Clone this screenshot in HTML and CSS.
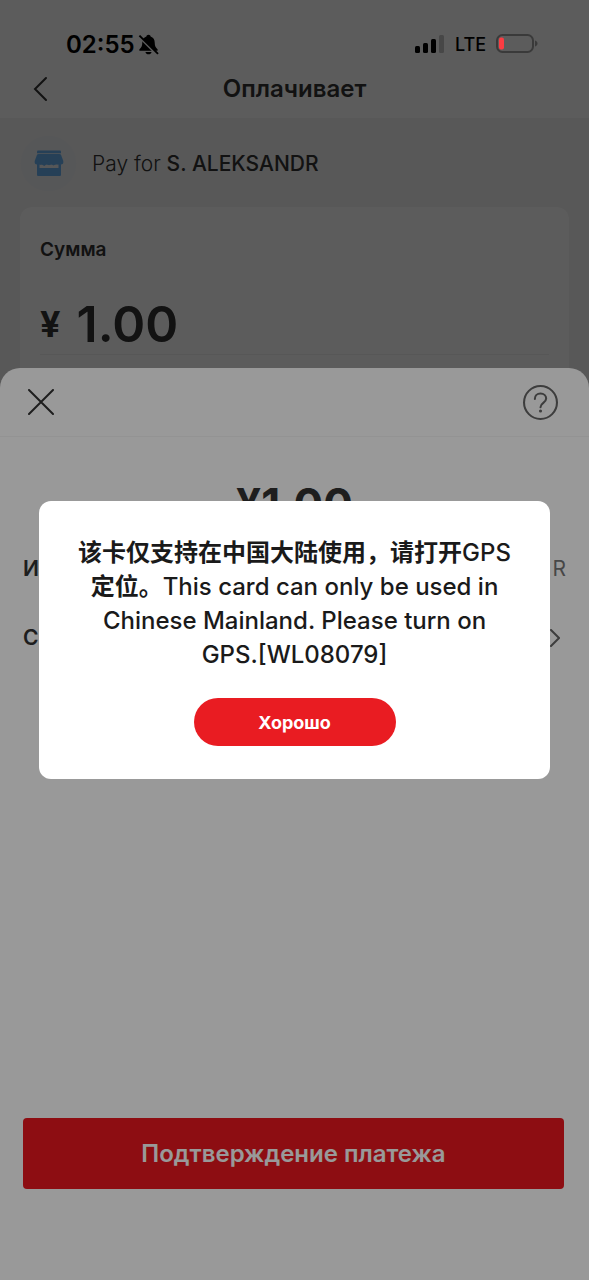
FILE: index.html
```html
<!DOCTYPE html>
<html lang="ru">
<head>
<meta charset="utf-8">
<meta name="viewport" content="width=device-width, initial-scale=1">
<title>Оплачивает</title>
<link rel="stylesheet" href="styles.css">
</head>
<body>
<div class="screen">
  <div class="status-bar">
    <div class="status-left">
      <span class="clock">02:55</span>
      <svg class="bell" viewBox="0 0 22 22" aria-hidden="true">
        <path d="M11 .8c-1.200 0-2.100.8-2.200 1.900C5.900 3.600 4.500 6 4.500 8.800c0 4-1.200 5.400-2.900 7.100-.5.6-.3 1.700.6 1.700h17.600c.9 0 1.100-1.100.6-1.700-1.700-1.700-2.900-3.100-2.900-7.100 0-2.800-1.400-5.200-4.300-6.100C13.100 1.600 12.200.8 11 .8zM7.800 18.800c.3 1.500 1.600 2.500 3.200 2.500s2.900-1 3.200-2.500z"/>
        <path class="bell-gap" d="M1 3 19.500 21.500"/>
        <path class="bell-slash" d="M1.500 1.700 21 20.800"/>
      </svg>
    </div>
    <div class="status-right">
      <svg class="signal" viewBox="0 0 30 20" aria-hidden="true">
        <rect x="0" y="12" width="5" height="7" rx="1.500"/>
        <rect x="8" y="9" width="5" height="10" rx="1.500"/>
        <rect x="16" y="5" width="5" height="14" rx="1.500"/>
        <rect class="signal-off" x="24" y="1" width="5" height="18" rx="1.500"/>
      </svg>
      <span class="network">LTE</span>
      <svg class="battery" viewBox="0 0 42 20" aria-hidden="true">
        <rect class="battery-case" x="1" y="1" width="36" height="17" rx="5.500"/>
        <rect class="battery-level" x="3" y="3.500" width="5" height="12" rx="2"/>
        <path class="battery-tip" d="M39 6.500c1.600.6 2.500 1.700 2.500 3s-.9 2.400-2.500 3z"/>
      </svg>
    </div>
  </div>

  <main class="page">
    <header class="nav">
      <button class="icon-button" type="button" aria-label="Назад">
        <svg class="back" viewBox="0 0 16 26"><path d="M13 2 2 13l11 11"/></svg>
      </button>
      <h1 class="nav-title">Оплачивает</h1>
    </header>
    <div class="payee">
      <span class="avatar">
        <svg class="shop" viewBox="0 0 30 28" aria-hidden="true">
          <path d="M4 .5h22a1 1 0 0 1 1 1v1.700H3V1.500a1 1 0 0 1 1-1z"/>
          <path d="M4.500 4h21c.8 0 1.300.3 1.600 1L29.300 11v1.500c0 1.200-.9 2-2.300 2H3c-1.400 0-2.300-.8-2.300-2V11L2.900 5c.3-.7.8-1 1.600-1z"/>
          <path d="M5.500 13h19v1.200l-2.300-.2-2.700 1.400-2-1.200-2.500 1-2.500-1-2.200 1.700-2.400-1.500-2.400.4z"/>
          <path d="M3 13.500h2.500v4.500h19v-4.500H27v11.500a1 1 0 0 1-1 1H4a1 1 0 0 1-1-1z"/>
        </svg>
      </span>
      <p class="payee-text">Pay for <strong>S. ALEKSANDR</strong></p>
    </div>
    <section class="amount-card">
      <h2 class="amount-label">Сумма</h2>
      <p class="amount"><span class="currency">¥</span> <span class="value">1.00</span></p>
    </section>
  </main>

  <div class="scrim"></div>

  <section class="sheet">
    <div class="sheet-head">
      <button class="icon-button" type="button" aria-label="Закрыть">
        <svg class="close" viewBox="0 0 26 26"><path d="M1 1l24 24M25 1 1 25"/></svg>
      </button>
      <button class="icon-button" type="button" aria-label="Справка">
        <svg class="help" viewBox="0 0 34 34"><circle cx="17" cy="17" r="16"/><path d="M11.500 13.500c0-3.200 2.300-5.200 5.500-5.200s5.500 2 5.500 4.900c0 4.200-5.500 4.100-5.500 8.300"/><circle class="help-dot" cx="17" cy="25.300" r="1.500"/></svg>
      </button>
    </div>
    <p class="sheet-amount">¥1.00</p>
    <div class="sheet-row">
      <span class="row-label">И</span><span class="row-value">R</span>
    </div>
    <div class="sheet-row">
      <span class="row-label">С</span>
      <svg class="chevron" viewBox="0 0 10 18" aria-hidden="true"><path d="M1 1l8 8-8 8"/></svg>
    </div>
    <button class="pay-button" type="button">Подтверждение платежа</button>
  </section>

  <div class="dialog-layer">
    <div class="dialog" role="alertdialog" aria-modal="true" aria-labelledby="message">
      <p class="message" id="message"><span class="han" lang="zh-CN">该卡仅支持在中国大陆使用，请打开</span>GPS<br><span class="han" lang="zh-CN">定位。</span>This card can only be used in<br>Chinese Mainland. Please turn on<br>GPS.[WL08079]</p>
      <button class="ok-button" type="button">Хорошо</button>
    </div>
  </div>
</div>
</body>
</html>
```
FILE: styles.css
```css
* { box-sizing: border-box; }

body {
  margin: 0;
  font-family: Inter, "Noto Sans CJK SC", sans-serif;
  color: #333;
}

h1, h2, p { margin: 0; }

button {
  border: 0;
  padding: 0;
  font: inherit;
  color: inherit;
}

svg { display: block; }

.screen {
  position: relative;
  min-height: 100vh;
  overflow: hidden;
  background: #f5f5f5;
}

.status-bar {
  position: absolute;
  inset: 0 0 auto;
  z-index: 3;
  display: flex;
  justify-content: space-between;
  align-items: center;
  padding: 28px 51px 0 66px;
  color: #000;
}

.status-left,
.status-right {
  display: flex;
  align-items: center;
  height: 32px;
}

.status-left { gap: 3px; }
.status-right { gap: 10px; }

.clock { font-size: 24px; font-weight: 600; }
.bell { width: 21px; height: 21px; }
.bell-gap { stroke: #5c5c5c; stroke-width: 2; }
.bell-slash { stroke: #000; stroke-width: 2; }
.signal { width: 30px; height: 20px; }
.signal-off { fill: #474747; }
.network { font-size: 18px; font-weight: 500; }
.battery { width: 42px; height: 20px; }
.battery-case { fill: none; stroke: #3a3a3a; stroke-width: 2; }
.battery-level { fill: #fb3c42; }
.battery-tip { fill: #3a3a3a; }

.nav {
  position: relative;
  display: flex;
  align-items: center;
  height: 118px;
  padding: 60px 33px 0;
  background: #fff;
}

.nav-title {
  position: absolute;
  inset: 60px 0 0;
  line-height: 58px;
  text-align: center;
  font-size: 24px;
  font-weight: 600;
  pointer-events: none;
}

.icon-button { background: none; }

.icon-button svg,
.chevron {
  fill: none;
  stroke: #333;
  stroke-width: 2;
  stroke-linecap: round;
}

.back { width: 16px; height: 26px; }

.payee {
  display: flex;
  align-items: center;
  gap: 16px;
  padding: 18px 21px 16px;
}

.avatar {
  display: grid;
  place-items: center;
  width: 55px;
  height: 55px;
  border-radius: 50%;
  background: #eff3f6;
}

.shop { width: 30px; height: 28px; fill: #6cb4f4; }

.payee-text { font-size: 21px; font-weight: 300; }
.payee-text strong { font-weight: 500; }

.amount-card {
  margin: 0 20px;
  padding: 30px 20px 0;
  height: 240px;
  border-radius: 12px;
  background: #fff;
}

.amount-label { font-size: 19px; line-height: 26px; font-weight: 600; }

.amount {
  display: flex;
  align-items: center;
  gap: 16px;
  padding: 35px 0 4px;
  border-bottom: 1px solid #f2f2f2;
  line-height: 52px;
  font-weight: 600;
}

.currency { font-size: 36px; font-weight: 700; }
.value { font-size: 50px; }

.scrim {
  position: absolute;
  inset: 0;
  background: rgba(0, 0, 0, 0.4);
}

.sheet {
  position: absolute;
  inset: 368px 0 0;
  display: flex;
  flex-direction: column;
  padding-bottom: 91px;
  border-radius: 20px 20px 0 0;
  background: #fff;
}

.sheet-head {
  display: flex;
  justify-content: space-between;
  align-items: center;
  height: 69px;
  padding: 0 31px 0 28px;
  border-bottom: 1px solid #f5f5f5;
}

.close { width: 26px; height: 26px; }
.help { width: 35px; height: 35px; }
.icon-button .help { stroke: #666; }
.icon-button .help-dot { fill: #666; stroke: none; }

.sheet-amount {
  padding-top: 37px;
  text-align: center;
  font-size: 44px;
  line-height: 60px;
  font-weight: 700;
}

.sheet-row {
  display: flex;
  justify-content: space-between;
  align-items: center;
  height: 69px;
  padding: 0 23px;
  font-size: 21px;
  line-height: 28px;
}

.row-label { font-weight: 600; }
.row-value { color: #777; }
.chevron { width: 10px; height: 18px; margin-right: 6px; stroke: #666; }

.pay-button {
  margin: auto 25px 0 23px;
  height: 71px;
  border-radius: 4px;
  background: #ec171e;
  color: #fff;
  font-size: 24px;
  font-weight: 600;
}

.dialog-layer {
  position: absolute;
  inset: 0;
  z-index: 2;
  display: grid;
  align-items: center;
  padding: 0 39px;
  background: rgba(0, 0, 0, 0.4);
}

.dialog {
  display: flex;
  flex-direction: column;
  align-items: center;
  gap: 26px;
  padding: 35px 12px 33px;
  border-radius: 12px;
  background: #fff;
}

.message {
  color: #1a1a1a;
  text-align: center;
  font-size: 24px;
  line-height: 34px;
  font-weight: 500;
  white-space: nowrap;
}

.han { font-weight: 700; }

.ok-button {
  width: 202px;
  height: 48px;
  border-radius: 24px;
  background: #e91c22;
  color: #fff;
  font-size: 18px;
  font-weight: 700;
}
```
